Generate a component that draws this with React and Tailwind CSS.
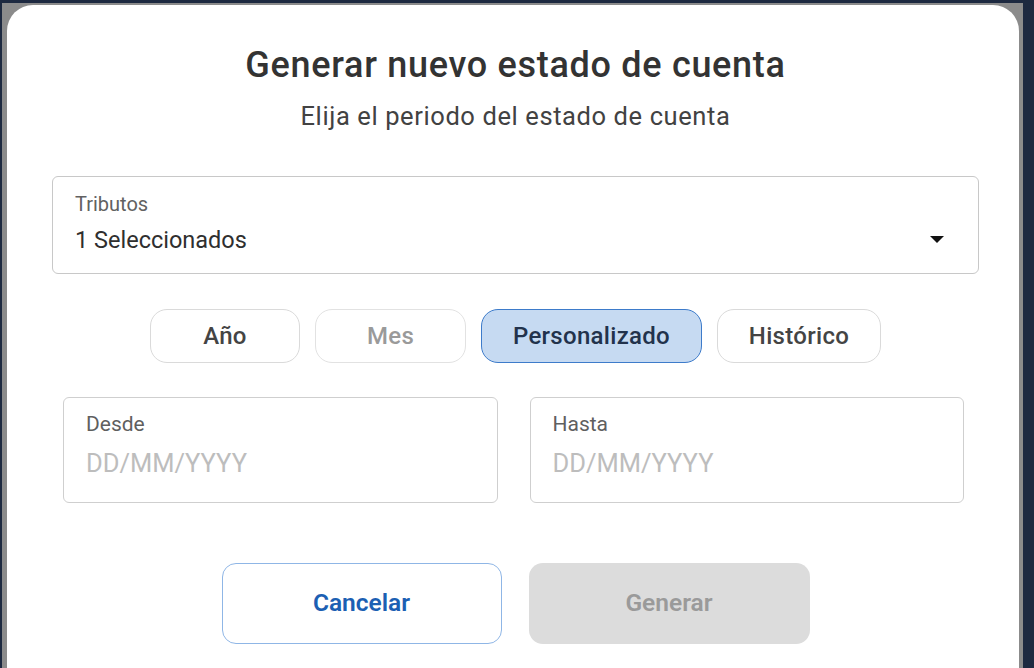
import React, { useState } from 'react';

const periodos = [
    { id: 'anio', label: 'Año', width: 'w-[150px]' },
    { id: 'mes', label: 'Mes', width: 'w-[151px]', disabled: true },
    { id: 'personalizado', label: 'Personalizado', width: 'w-[221px]' },
    { id: 'historico', label: 'Histórico', width: 'w-[164px]' },
];

const DateField = ({ label }) => (
    <div className="flex-1 h-[106px] border border-[#cfcfcf] rounded-[6px] px-[22px] pt-[13px]">
        <div className="text-[21px] leading-[26px] text-[#5f5f5f]">{label}</div>
        <div className="mt-[11px] text-[25.5px] leading-[30px] text-[#bdbdbd]">DD/MM/YYYY</div>
    </div>
);

const App = () => {
    const [periodo, setPeriodo] = useState('personalizado');

    return (
        <div className="h-screen bg-[#1d2940] pl-[2px] pr-[11px] pt-[3px] overflow-hidden" style={{ fontFamily: 'Roboto, "Open Sans", sans-serif' }}>
            <div className="h-full bg-[#8b8b8b] pl-[5px] pr-[4px] pt-[2px]">
                <div className="h-[700px] bg-white rounded-[26px] pl-[45px] pr-[40px] pt-[36px]">
                    {/* encabezado */}
                    <h1 className="text-center text-[36px] leading-[48px] tracking-[0.7px] font-medium text-[#333333]">Generar nuevo estado de cuenta</h1>
                    <p className="text-center text-[25.5px] leading-[30px] tracking-[0.6px] text-[#424242] mt-[12px]">Elija el periodo del estado de cuenta</p>

                    {/* selector de tributos */}
                    <div className="mt-[45px] h-[98px] border border-[#c8c8c8] rounded-[6px] pl-[22px] pr-[34px] pt-[14px] flex items-start justify-between">
                        <div>
                            <div className="text-[20px] leading-[26px] text-[#616161]">Tributos</div>
                            <div className="mt-[8px] text-[23.5px] leading-[30px] text-[#2f2f2f]">1 Seleccionados</div>
                        </div>
                        <svg className="mt-[45px]" width="14" height="8" viewBox="0 0 14 8"><path d="M0 0 L14 0 L7 7 Z" fill="#111" /></svg>
                    </div>

                    {/* periodo */}
                    <div className="mt-[35px] flex justify-center gap-[15px]">
                        {periodos.map(p => {
                            const active = periodo === p.id;
                            return (
                                <button
                                    key={p.id}
                                    disabled={p.disabled}
                                    onClick={() => setPeriodo(p.id)}
                                    className={`${p.width} h-[54px] rounded-[17px] border text-[24px] tracking-[0.3px] font-medium ${active ? 'bg-[#c6daf2] border-[#3d7bca] text-[#22324c]' : p.disabled ? 'bg-white border-[#e2e2e2] text-[#9a9a9a]' : 'bg-white border-[#dadada] text-[#444444]'}`}
                                >
                                    {p.label}
                                </button>
                            );
                        })}
                    </div>

                    {/* fechas */}
                    <div className="mt-[34px] mx-[11px] flex gap-[32px] w-[901px]">
                        <DateField label="Desde" />
                        <DateField label="Hasta" />
                    </div>

                    {/* acciones */}
                    <div className="mt-[60px] flex justify-center gap-[27px]">
                        <button className="w-[280px] h-[81px] rounded-[14px] border border-[#8fb6e6] bg-white text-[24.5px] font-semibold text-[#1c5fb3]">Cancelar</button>
                        <button disabled className="w-[281px] h-[81px] rounded-[14px] bg-[#dcdcdc] text-[24.5px] font-semibold text-[#9a9a9a]">Generar</button>
                    </div>
                </div>
            </div>
        </div>
    );
};

export default App;
